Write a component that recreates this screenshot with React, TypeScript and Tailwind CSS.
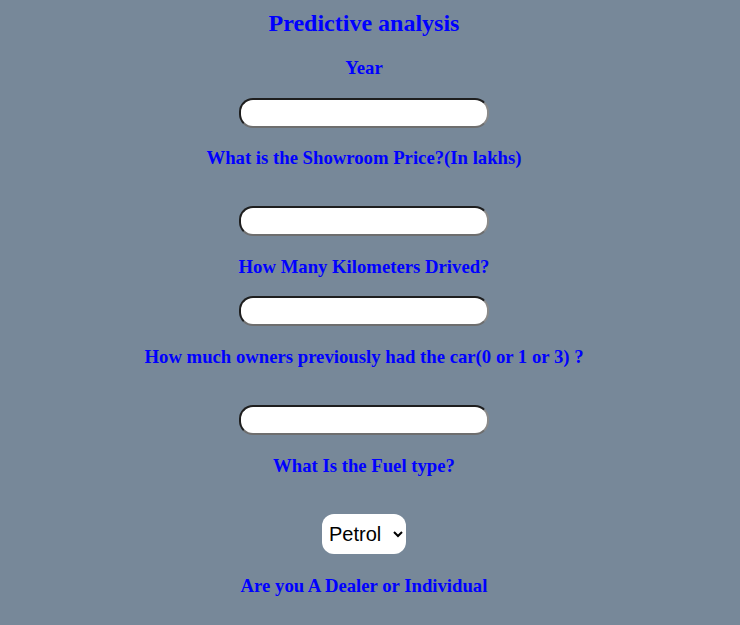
import React from "react";

const labelCls =
  "h-[22px] leading-[22px] text-[18.72px] font-bold text-[#0000ff] text-center whitespace-nowrap";
const inputCls =
  "block w-[250px] h-[30px] rounded-[14px] bg-white border-2 border-t-[#1e1e1e] border-l-[#1e1e1e] border-b-[#6e6e6e] border-r-[#8a8a8a] px-2 outline-none";

export default function App() {
  return (
    <div
      className="min-h-[625px] w-full bg-[#778899] flex flex-col items-center pr-[12px]"
      style={{ fontFamily: '"Liberation Serif", "Times New Roman", serif' }}
    >
      <h2 className="mt-[9px] h-[28px] leading-[28px] text-[24px] font-bold text-[#0000ff]">
        Predictive analysis
      </h2>
      <div className={`mt-[20px] ${labelCls}`}>Year</div>
      <input className={`mt-[19px] ${inputCls}`} />
      <div className={`mt-[19px] ${labelCls}`}>What is the Showroom Price?(In lakhs)</div>
      <input className={`mt-[37px] ${inputCls}`} />
      <div className={`mt-[20px] ${labelCls}`}>How Many Kilometers Drived?</div>
      <input className={`mt-[18px] ${inputCls}`} />
      <div className={`mt-[20px] ${labelCls}`}>
        How much owners previously had the car(0 or 1 or 3) ?
      </div>
      <input className={`mt-[37px] ${inputCls}`} />
      <div className={`mt-[20px] ${labelCls}`}>What Is the Fuel type?</div>
      <select
        className="mt-[37px] w-[84px] h-[40px] rounded-[12px] bg-white text-[20px] text-black pl-[3px] pr-[4px] border-0 outline-none"
        style={{ fontFamily: '"Liberation Sans", Arial, sans-serif' }}
        defaultValue="Petrol"
      >
        <option>Petrol</option>
        <option>Diesel</option>
        <option>CNG</option>
      </select>
      <div className={`mt-[21px] ${labelCls}`}>Are you A Dealer or Individual</div>
    </div>
  );
}
